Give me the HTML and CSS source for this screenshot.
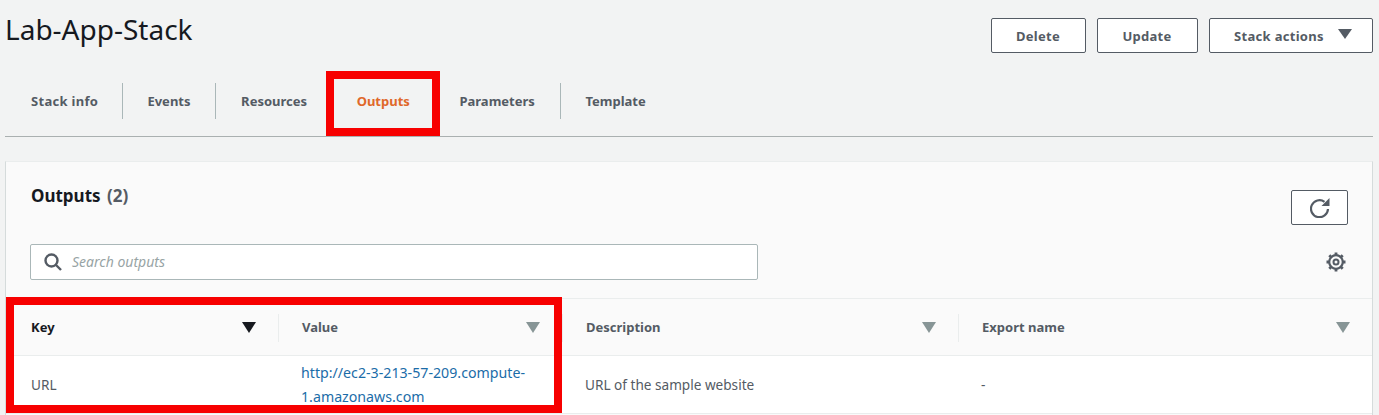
FILE: index.html
```html
<!DOCTYPE html>
<html lang="en">
<head>
    <meta charset="UTF-8">
    <title>Lab-App-Stack</title>
    <link rel="stylesheet" href="styles.css">
</head>
<body>

<div class="page">
    <!-- Title and actions -->
    <div class="top">
        <h1 class="title">Lab-App-Stack</h1>
        <div class="actions">
            <button class="btn btn-delete">Delete</button>
            <button class="btn btn-update">Update</button>
            <button class="btn btn-stack">Stack actions
                <svg class="caret" width="14" height="10" viewBox="0 0 14 10"><path d="M0 0h14L7 10z" fill="#545b64"/></svg>
            </button>
        </div>
    </div>

    <!-- Tabs -->
    <div class="tabs">
        <a class="tab tab-first tab-div">Stack info</a>
        <a class="tab tab-div">Events</a>
        <a class="tab">Resources</a>
        <a class="tab tab-active">Outputs</a>
        <a class="tab tab-div">Parameters</a>
        <a class="tab">Template</a>
    </div>

    <!-- Outputs panel -->
    <div class="panel">
        <div class="panel-head">
            <h2 class="panel-title">Outputs <span class="count">(2)</span></h2>
            <button class="btn-refresh">
                <svg width="20" height="20" viewBox="0 0 20 20" fill="none" stroke="#545b64" stroke-width="2.200"><path d="M14.500 3.800A8.500 8.500 0 1 0 18 11"/><path d="M19.500 0v8h-8z" fill="#545b64" stroke="none"/></svg>
            </button>
        </div>
        <div class="search-row">
            <div class="search">
                <svg width="18" height="18" viewBox="0 0 18 18" fill="none" stroke="#545b64" stroke-width="2.400"><circle cx="7.500" cy="7.500" r="6"/><path d="M12 12l5 5"/></svg>
                <span class="search-text">Search outputs</span>
            </div>
            <svg class="gear" width="20" height="20" viewBox="0 0 20 20" fill="none" stroke="#545b64"><circle cx="10" cy="10" r="2.500" stroke-width="2"/><circle cx="10" cy="10" r="6.800" stroke-width="2.200"/><path d="M10 .500v3.500M10 16v3.500M.500 10H4M16 10h3.500M3.300 3.300l2.400 2.400M14.300 14.300l2.400 2.400M3.300 16.700l2.400-2.400M14.300 5.700l2.400-2.400" stroke-width="2.800"/></svg>
        </div>

        <div class="table">
            <div class="cell-head head-sorted"><span>Key</span><svg width="14" height="11" viewBox="0 0 14 11"><path d="M0 0h14L7 11z" fill="#16191f"/></svg></div>
            <div class="cell-head"><span>Value</span><svg width="14" height="11" viewBox="0 0 14 11"><path d="M0 0h14L7 11z" fill="#879596"/></svg></div>
            <div class="cell-head"><span>Description</span><svg width="14" height="11" viewBox="0 0 14 11"><path d="M0 0h14L7 11z" fill="#879596"/></svg></div>
            <div class="cell-head"><span>Export name</span><svg width="14" height="11" viewBox="0 0 14 11"><path d="M0 0h14L7 11z" fill="#879596"/></svg></div>

            <div class="cell">URL</div>
            <div class="cell"><a class="link">http://ec2-3-213-57-209.compute-1.amazonaws.com</a></div>
            <div class="cell">URL of the sample website</div>
            <div class="cell">-</div>
        </div>
    </div>

    <!-- Red highlight boxes -->
    <div class="mark mark-tab"></div>
    <div class="mark mark-table"></div>
</div>

</body>
</html>
```

FILE: styles.css
```css
html, body {
    margin: 0;
    padding: 0;
    height: 415px;
    overflow: hidden;
}
body {
    font-family: "Noto Sans", "Open Sans", sans-serif;
    font-size: 13px;
    color: #16191f;
    background: #f2f3f3;
}
.page {
    position: relative;
    height: 415px;
    padding-left: 5px;
    width: 1368px;
}
.top {
    display: flex;
    justify-content: space-between;
    align-items: flex-start;
    height: 71px;
}
.title {
    margin: 9px 0 0;
    font-size: 28px;
    line-height: 40px;
    font-weight: 400;
}
.actions {
    display: flex;
    gap: 11px;
    padding-top: 18px;
}
.btn, .btn-refresh {
    box-sizing: border-box;
    height: 35px;
    background: #fff;
    border: 1px solid #545b64;
    border-radius: 2px;
    color: #545b64;
    font: 700 13px "Noto Sans", sans-serif;
    letter-spacing: 0.3px;
    padding: 0;
}
.btn-delete { width: 95px; padding-right: 1px; }
.btn-update { width: 101px; padding-right: 1px; }
.btn-stack {
    width: 164px;
    display: flex;
    align-items: center;
    justify-content: center;
    gap: 14px;
    padding-left: 4px;
}
.caret { margin-top: -3px; }
.tabs {
    display: flex;
    height: 65px;
    border-bottom: 1px solid #aab0b0;
    align-items: center;
}
.tab {
    padding: 0 24.8px;
    height: 36px;
    line-height: 36px;
    margin-top: -5px;
    font-weight: 700;
    font-size: 13px;
    color: #545b64;
}
.tab-first {
    padding: 0 23.4px 0 26px;
    letter-spacing: 0.3px;
}
.tab-div { border-right: 1px solid #aab7b8; }
.tab-active { color: #e0682a; }
.panel {
    margin-top: 24px;
    height: 260px;
    background: #fafafa;
    border-left: 1px solid #d5dbdb;
    border-top: 1px solid #eaeded;
    border-right: 1px solid #d5dbdb;
}
.panel-head {
    display: flex;
    justify-content: space-between;
    align-items: flex-start;
    padding: 0 24px 0 25px;
    height: 82px;
}
.panel-title {
    margin: 22px 0 0;
    font-size: 17px;
    line-height: 24px;
    font-weight: 700;
}
.count {
    margin-left: 2px;
    color: #545b64;
}
.btn-refresh {
    width: 57px;
    margin-top: 28px;
    display: flex;
    align-items: center;
    justify-content: center;
}
.search-row {
    display: flex;
    justify-content: space-between;
    align-items: center;
    padding: 0 26px 0 24px;
    height: 36px;
}
.search {
    box-sizing: border-box;
    width: 728px;
    height: 36px;
    display: flex;
    align-items: center;
    gap: 10px;
    padding-left: 13px;
    background: #fff;
    border: 1px solid #aab7b8;
    border-radius: 2px;
}
.search-text {
    font-style: italic;
    font-size: 14px;
    line-height: 18px;
    margin-top: -1px;
    color: #98a4a5;
}
.table {
    margin-top: 18px;
    display: grid;
    grid-template-columns: 272px 284px 396px 1fr;
    grid-template-rows: 57px 58px;
    border-top: 1px solid #eaeded;
}
.cell-head {
    position: relative;
    display: flex;
    justify-content: space-between;
    align-items: center;
    padding: 0 22px 0 24px;
    font-weight: 700;
    color: #545b64;
    border-bottom: 1px solid #eaeded;
}
.cell-head + .cell-head::before {
    content: "";
    position: absolute;
    left: 0;
    top: 15px;
    height: 28px;
    border-left: 1px solid #eaeded;
}
.head-sorted {
    padding-left: 25px;
    color: #16191f;
}
.cell {
    display: flex;
    align-items: center;
    padding: 0 23px;
    background: #fff;
    color: #545b64;
    font-size: 13.6px;
    line-height: 24px;
    border-bottom: 1px solid #eaeded;
}
.cell:nth-child(5) { padding-left: 25px; }
.link {
    color: #1b6ca8;
    font-size: 14.2px;
}
.mark {
    position: absolute;
    box-sizing: border-box;
    border: 8px solid #f70000;
}
.mark-tab {
    left: 326px;
    top: 71px;
    width: 114px;
    height: 65px;
}
.mark-table {
    left: 6px;
    top: 297px;
    width: 556px;
    height: 116px;
}
```
